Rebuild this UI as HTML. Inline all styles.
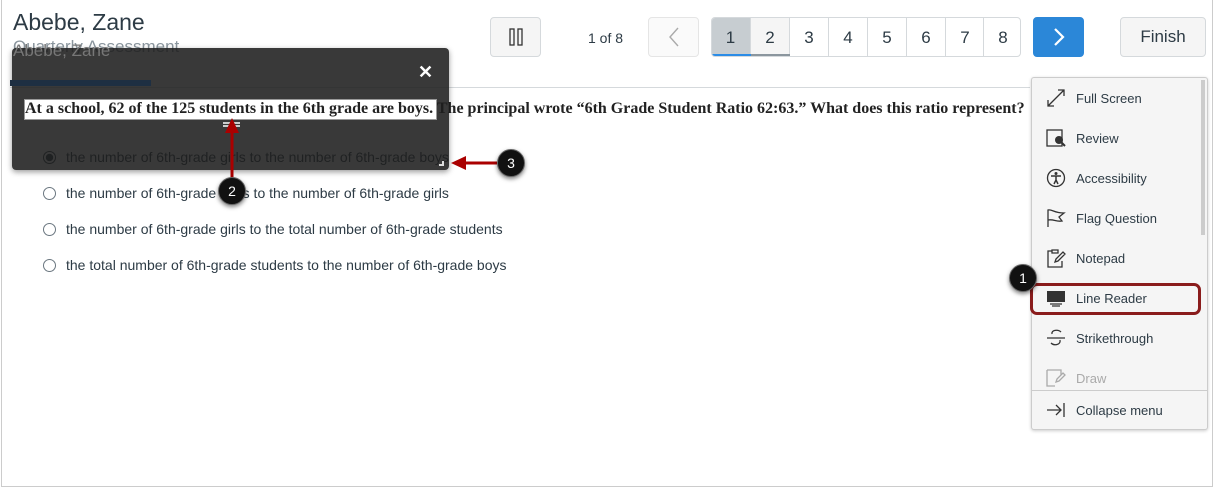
<!DOCTYPE html><html><head><style>
*{box-sizing:border-box;margin:0;padding:0}
body{width:1218px;height:489px;background:#fff;position:relative;overflow:hidden;font-family:"Liberation Sans",sans-serif;color:#2d3b45}
.a{position:absolute}
.btn{position:absolute;top:17px;height:40px;border:1px solid #d5d9dc;border-radius:4px;background:#f5f5f5;display:flex;align-items:center;justify-content:center}
.pg{position:absolute;top:17px;height:40px;width:39px;border-left:1px solid #d5d9dc;display:flex;align-items:center;justify-content:center;font-size:17px}
.opt{position:absolute;left:43px;font-size:14px;display:flex;align-items:center}
.opt i{width:13px;height:13px;border:1px solid #6b7780;border-radius:50%;margin-right:10px;display:inline-block}
.mi{position:absolute;left:1046px;font-size:13px;display:flex;align-items:center;height:20px}
.mi svg{margin-right:10px}
.c{position:absolute;width:28px;height:28px;border-radius:50%;background:#111;color:#fff;font-size:14px;display:flex;align-items:center;justify-content:center;box-shadow:0 2px 4px rgba(0,0,0,.5);border:1px solid #666}
.q{font:bold 16px 'Liberation Serif',serif;color:#222;white-space:nowrap}
</style></head><body>
<div class="a" style="left:1px;top:0;width:1212px;height:487px;border:1px solid #ccc;border-top:none"></div>
<div class="a" style="left:13px;top:9px;font-size:23px;color:#2d3b45">Abebe, Zane</div>
<div class="a" style="left:13px;top:37px;font-size:17px;color:#8b969e">Quarterly Assessment</div>
<div class="a" style="left:10px;top:87px;width:1020px;height:1px;background:#d5d9dc"></div>
<div class="a" style="left:10px;top:80px;width:141px;height:6px;background:#2b74c7"></div>
<div class="btn" style="left:490px;width:51px"><svg width="14" height="18"><rect x="1" y="1" width="4" height="16" fill="none" stroke="#333" stroke-width="1.3"/><rect x="9" y="1" width="4" height="16" fill="none" stroke="#333" stroke-width="1.3"/></svg></div>
<div class="a" style="left:588px;top:30px;font-size:14px">1 of 8</div>
<div class="btn" style="left:648px;width:51px;background:#fafafa;border-color:#e5e5e5"><svg width="12" height="20"><path d="M10 1L2 10l8 9" fill="none" stroke="#aaa" stroke-width="1.4"/></svg></div>
<div class="a" style="left:711px;top:17px;width:310px;height:40px;border:1px solid #d5d9dc;border-radius:4px;overflow:hidden">
<div class="pg" style="left:-1px;top:0;border:none;background:#c7cdd1">1</div>
<div class="pg" style="left:38px;top:0;background:#f5f5f5">2</div>
<div class="pg" style="left:77px;top:0">3</div><div class="pg" style="left:116px;top:0">4</div><div class="pg" style="left:155px;top:0">5</div><div class="pg" style="left:194px;top:0">6</div><div class="pg" style="left:233px;top:0">7</div><div class="pg" style="left:271px;top:0">8</div>
<div class="a" style="left:0;top:36px;width:39px;height:3px;background:#2b8ce6"></div>
<div class="a" style="left:39px;top:36px;width:39px;height:3px;background:#8b969e"></div>
</div>
<div class="btn" style="left:1033px;width:51px;background:#2b87d8;border-color:#2b87d8"><svg width="12" height="20"><path d="M2 2l8 8-8 8" fill="none" stroke="#fff" stroke-width="2.2"/></svg></div>
<div class="btn" style="left:1120px;width:86px;font-size:17px">Finish</div>

<div class="a q" style="left:25px;top:100px">At a school, 62 of the 125 students in the 6th grade are boys. The principal wrote “6th Grade Student Ratio 62:63.” What does this ratio represent?</div>
<div class="opt" style="top:149px"><i style="border-color:#2d3b45;background:radial-gradient(#2d3b45 45%,#fff 50%)"></i>the number of 6th-grade girls to the number of 6th-grade boys</div>
<div class="opt" style="top:185px"><i></i>the number of 6th-grade boys to the number of 6th-grade girls</div>
<div class="opt" style="top:221px"><i></i>the number of 6th-grade girls to the total number of 6th-grade students</div>
<div class="opt" style="top:257px"><i></i>the total number of 6th-grade students to the number of 6th-grade boys</div>

<div class="a" style="left:12px;top:48px;width:437px;height:122px;background:rgba(30,30,30,.88);border-radius:4px;box-shadow:0 2px 6px rgba(0,0,0,.4)"></div>
<div class="a" style="left:13px;top:41px;font-size:17px;color:#777">Abebe, Zane</div>
<div class="a" style="left:10px;top:80px;width:141px;height:6px;background:#1e2f42"></div>
<div class="a" style="left:418px;top:62px;color:#fff;font-size:18px;font-weight:bold">✕</div>
<div class="a" style="left:24px;top:99px;width:413px;height:21px;background:#fff;border:1px solid #999"></div>
<div class="a q" style="left:25px;top:100px">At a school, 62 of the 125 students in the 6th grade are boys.</div>
<div class="a" style="left:223px;top:122px;width:17px;height:5px;border-top:2px solid #ccc;border-bottom:2px solid #ccc"></div>
<div class="a" style="left:439px;top:161px;width:5px;height:5px;border-right:2px solid #ddd;border-bottom:2px solid #ddd"></div>

<div class="a" style="left:1031px;top:77px;width:177px;height:353px;background:#f5f5f5;border:1px solid #ccc;border-radius:3px;box-shadow:0 1px 3px rgba(0,0,0,.2)"></div>
<div class="a" style="left:1201px;top:80px;width:4px;height:155px;background:#ccc"></div>
<div class="mi" style="top:88px"><svg width="20" height="20"><path d="M2 18L18 2M2 12v6h6M12 2h6v6" fill="none" stroke="#333" stroke-width="1.3"/></svg>Full Screen</div>
<div class="mi" style="top:128px"><svg width="20" height="20"><rect x="1" y="2" width="15" height="16" fill="none" stroke="#333" stroke-width="1.3"/><circle cx="13" cy="12" r="4" fill="#333"/><path d="M15 14l4 4" stroke="#333" stroke-width="2"/></svg>Review</div>
<div class="mi" style="top:168px"><svg width="20" height="20"><circle cx="10" cy="10" r="8.5" fill="none" stroke="#333" stroke-width="1.3"/><circle cx="10" cy="5.5" r="1.5" fill="#333"/><path d="M5 8h10M10 8v4l-2 4M10 12l2 4" stroke="#333" stroke-width="1.5" fill="none"/></svg>Accessibility</div>
<div class="mi" style="top:208px"><svg width="20" height="20"><path d="M2 19V2c4-1 6 3 16 3l-5 4 3 4c-6 1-8-2-14-1" fill="none" stroke="#333" stroke-width="1.3"/></svg>Flag Question</div>
<div class="mi" style="top:248px"><svg width="20" height="20"><path d="M6 3H2v16h14v-6M6 2h6v3H6z" fill="none" stroke="#333" stroke-width="1.3"/><path d="M9 14l1-3 7-7 2 2-7 7z" fill="none" stroke="#333" stroke-width="1.3"/></svg>Notepad</div>
<div class="mi" style="top:288px"><svg width="20" height="20"><rect x="1" y="3" width="18" height="11" fill="#333"/><path d="M4 16h12M6 18h8" stroke="#333" stroke-width="1.2"/></svg>Line Reader</div>
<div class="mi" style="top:328px"><svg width="20" height="20"><path d="M1 10h18M15 4c-3-3-10-2-9 2M5 15c3 3 10 2 9-3" fill="none" stroke="#333" stroke-width="1.3"/></svg>Strikethrough</div>
<div class="mi" style="top:368px;color:#aaa"><svg width="20" height="20"><path d="M1 2h14v5M1 2v16h8M10 14l1-3 6-6 2 2-6 6z" fill="none" stroke="#aaa" stroke-width="1.3"/></svg>Draw</div>
<div class="a" style="left:1032px;top:390px;width:175px;height:1px;background:#ccc"></div>
<div class="mi" style="top:400px"><svg width="20" height="20"><path d="M1 10h14M10 5l5 5-5 5M18 3v14" fill="none" stroke="#333" stroke-width="1.3"/></svg>Collapse menu</div>
<div class="a" style="left:1030px;top:283px;width:171px;height:32px;border:3px solid #8a1c1c;border-radius:7px"></div>

<svg class="a" style="left:0;top:0" width="1218" height="489"><path d="M232 180V128" stroke="#a00" stroke-width="3"/><path d="M225 133L232 118 239 133z" fill="#a00"/><path d="M497 163H462" stroke="#a00" stroke-width="3"/><path d="M466 156L451 163 466 170z" fill="#a00"/></svg>
<div class="c" style="left:1009px;top:264px">1</div>
<div class="c" style="left:218px;top:177px">2</div>
<div class="c" style="left:497px;top:149px">3</div>
</body></html>
